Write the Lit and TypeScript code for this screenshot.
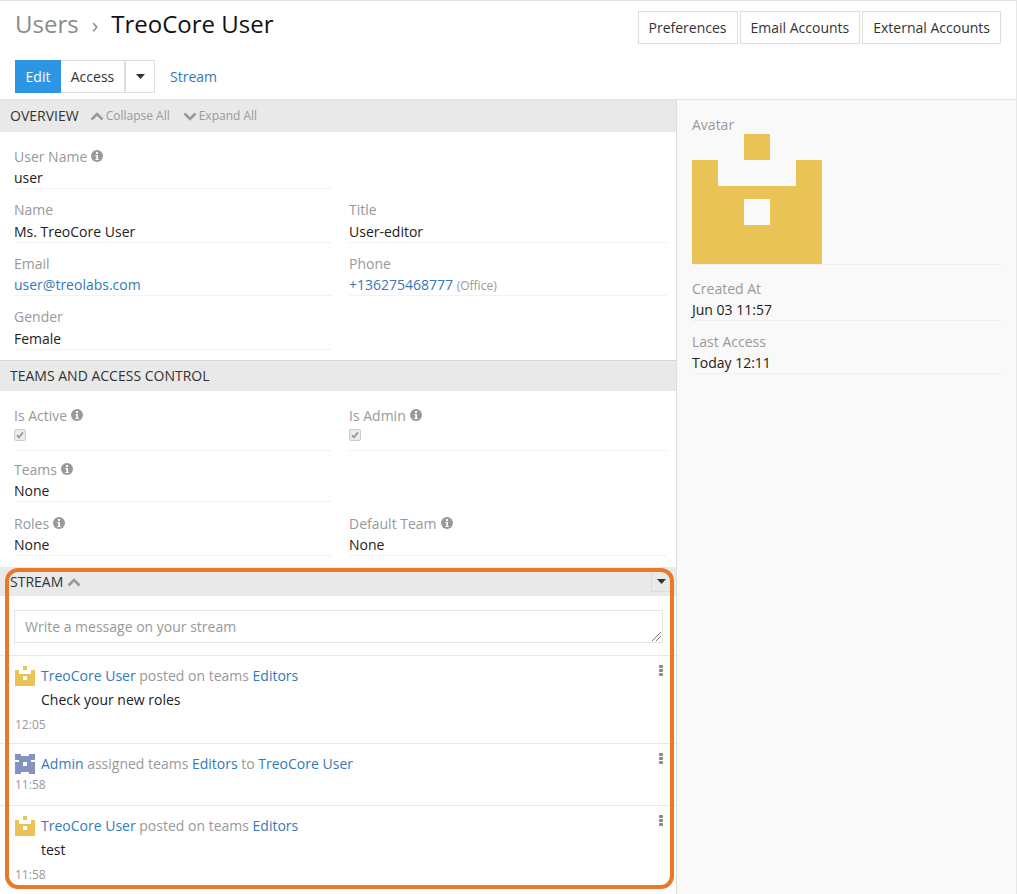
import { LitElement, css, html, svg } from 'lit';
import { customElement } from 'lit/decorators.js';

const info = html`<svg class="info" viewBox="0 0 12 12" width="12" height="12"><circle cx="6" cy="6" r="6" fill="#999"/><rect x="5" y="2" width="2" height="2" fill="#fff"/><path d="M4.4 5h2.6v4h.8v1H4.4V9h.9V6h-.9z" fill="#fff"/></svg>`;

const castle = (color: string, size: number) => html`<svg width=${size} height=${size} viewBox="0 0 10 10" shape-rendering="crispEdges">
  <g fill=${color}>${svg`<rect x="4" y="0" width="2" height="2"/><path d="M0 2h2v2h6V2h2v8H0z M4 5v2h2V5z" fill-rule="evenodd"/>`}</g>
</svg>`;

const admin = html`<svg width="20" height="20" viewBox="0 0 10 10" shape-rendering="crispEdges">
  <path fill="#8492bd" fill-rule="evenodd" d="M0 0h3v1h4V0h3v3H8v1h2v6H7V9H3v1H0V4h2V3H0z M4 4v2h2V4z"/>
</svg>`;

const caret = html`<svg width="9" height="5" viewBox="0 0 9 5"><path d="M0 0h9L4.5 5z" fill="#333"/></svg>`;

const chevron = (up: boolean, color = '#999') => html`<svg width="14" height="9" viewBox="0 0 14 9">
  <path d=${up ? 'M1.5 7.5 7 2l5.5 5.5' : 'M1.5 1.5 7 7l5.5-5.5'} fill="none" stroke=${color} stroke-width="2.6"/>
</svg>`;

@customElement('app-root')
export class AppRoot extends LitElement {
  field(label: string, value: unknown, hint = false) {
    return html`<div class="field">
      <div class="label">${label}${hint ? info : ''}</div>
      <div class="value">${value}</div>
    </div>`;
  }

  note(icon: unknown, head: unknown, time: string, text = '') {
    return html`<div class="note ${text ? 'post' : ''}">
      <a class="menu"><i></i><i></i><i></i></a>
      <div class="note-head"><span class="note-icon">${icon}</span><span>${head}</span></div>
      ${text ? html`<div class="note-text">${text}</div>` : ''}
      <div class="time">${time}</div>
    </div>`;
  }

  render() {
    const check = html`<span class="check"><svg width="8" height="8" viewBox="0 0 8 8"><path d="M1 4.2 3 6.4 7 1.4" fill="none" stroke="#999" stroke-width="1.8"/></svg></span>`;
    const empty = html`<div></div>`;
    return html`
      <header>
        <div class="top">
          <h1><span class="crumb">Users</span><span class="sep">›</span>TreoCore User</h1>
          <div class="top-buttons">
            <button>Preferences</button>
            <button>Email Accounts</button>
            <button>External Accounts</button>
          </div>
        </div>
        <div class="actions">
          <button class="primary">Edit</button>
          <button class="joined">Access</button>
          <button class="joined caret">${caret}</button>
          <a class="stream-link">Stream</a>
        </div>
      </header>
      <div class="columns">
        <main>
          <section>
            <div class="panel-head">
              <span class="panel-title">OVERVIEW</span>
              <span class="tool up">${chevron(true)}Collapse All</span>
              <span class="tool">${chevron(false)}Expand All</span>
            </div>
            <div class="grid overview">
              ${this.field('User Name', 'user', true)}${empty}
              ${this.field('Name', 'Ms. TreoCore User')}${this.field('Title', 'User-editor')}
              ${this.field('Email', html`<a>user@treolabs.com</a>`)}
              ${this.field('Phone', html`<a>+136275468777</a> <small>(Office)</small>`)}
              ${this.field('Gender', 'Female')}${empty}
            </div>
          </section>
          <section>
            <div class="panel-head teams"><span class="panel-title">TEAMS AND ACCESS CONTROL</span></div>
            <div class="grid access">
              ${this.field('Is Active', check, true)}${this.field('Is Admin', check, true)}
              ${this.field('Teams', 'None', true)}${empty}
              ${this.field('Roles', 'None', true)}${this.field('Default Team', 'None', true)}
            </div>
          </section>
          <section class="stream">
            <div class="panel-head stream-head">
              <span class="panel-title">STREAM</span><span class="stream-chev">${chevron(true)}</span>
              <span class="stream-menu">${caret}</span>
            </div>
            <div class="compose"><div class="textarea">Write a message on your stream
              <svg class="grip" width="9" height="9" viewBox="0 0 9 9"><path d="M0 9 9 0M4 9l5-5" stroke="#555" stroke-width=".8"/></svg></div></div>
            ${this.note(castle('#e9c356', 20), html`<a>TreoCore User</a> posted on teams <a>Editors</a>`, '12:05', 'Check your new roles')}
            ${this.note(admin, html`<a>Admin</a> assigned teams <a>Editors</a> to <a>TreoCore User</a>`, '11:58')}
            ${this.note(castle('#e9c356', 20), html`<a>TreoCore User</a> posted on teams <a>Editors</a>`, '11:58', 'test')}
          </section>
        </main>
        <aside>
          <div class="side-field avatar">
            <div class="label">Avatar</div>
            <div class="value">${castle('#e9c356', 130)}</div>
          </div>
          <div class="side-field"><div class="label">Created At</div><div class="value">Jun 03 11:57</div></div>
          <div class="side-field"><div class="label">Last Access</div><div class="value">Today 12:11</div></div>
        </aside>
      </div>
      <div class="highlight"></div>
    `;
  }

  static styles = css`
    :host {
      display: block;
      position: relative;
      height: 894px;
      overflow: hidden;
      box-sizing: border-box;
      border-top: 1px solid #e0e0e0;
      border-right: 1px solid #e8e8e8;
      background: #fff;
      font-family: 'Open Sans', sans-serif;
      font-size: 14px;
      line-height: 20px;
      color: #333;
    }
    * { box-sizing: border-box; }
    a { color: #337ab7; text-decoration: none; }

    header { height: 98px; padding: 0 15px; }
    .top { display: flex; justify-content: space-between; align-items: flex-start; }
    h1 {
      margin: 6px 0 0;
      font-size: 24px;
      font-weight: 400;
      line-height: 34px;
      color: #111;
    }
    .crumb { color: #8a8a8a; }
    .sep { color: #8a8a8a; margin: 0 13px; font-size: 22px; }
    .top-buttons { display: flex; gap: 2px; margin-top: 10px; }
    button {
      height: 33px;
      padding: 0 10px;
      border: 1px solid #ddd;
      background: #fff;
      font: inherit;
      color: #333;
    }
    .top-buttons button { padding: 0 10px; }
    .actions { display: flex; align-items: center; margin-top: 16px; }
    .primary { background: #2d96e4; border-color: #2d96e4; color: #fff; width: 46px; padding: 0; }
    .joined { border-left: none; width: 64px; padding: 0; }
    .caret { width: 30px; display: flex; align-items: center; justify-content: center; margin-right: 15px; border-left: 1px solid #ddd; }
    .stream-link { color: #337ab7; }

    .columns { display: flex; height: 795px; border-top: 1px solid #e4e4e4; }
    main { width: 677px; flex: none; border-right: 1px solid #ddd; background: #fff; }
    aside { flex: 1; background: #f9f9f9; padding: 14px 15px 0; }

    .panel-head {
      display: flex;
      align-items: center;
      height: 32px;
      padding: 0 10px;
      background: #e9e9e9;
      color: #333;
    }
    .teams { height: 31px; border-top: 1px solid #d8d8d8; }
    .panel-title { line-height: 20px; }
    .tool { display: flex; align-items: center; gap: 2px; font-size: 12px; color: #999; margin-left: 13px; }
    .tool.up { margin-left: 11px; }

    .grid { display: grid; grid-template-columns: 318px 318px; column-gap: 17px; padding: 14px 0 0 14px; }
    .overview { height: 228px; }
    .access { height: 176px; }
    .field { height: 53px; padding-top: 0; }
    .label { display: flex; align-items: center; gap: 4px; color: #999; height: 21px; }
    .info { flex: none; margin-top: -2px; }
    .value { height: 22px; border-bottom: 1px solid #f2f2f2; color: #222; line-height: 21px; }
    small { font-size: 12px; color: #999; }
    .check {
      display: flex;
      width: 12px;
      height: 12px;
      margin-top: 3px;
      align-items: center;
      justify-content: center;
      border: 1px solid #ccc;
      border-radius: 2px;
      background: #ececec;
    }

    .stream-head { position: relative; height: 29px; padding-top: 1px; }
    .stream-chev { margin-left: 4px; display: flex; }
    .stream-menu {
      position: absolute;
      right: 5px;
      top: 4px;
      width: 20px;
      height: 21px;
      border: 1px solid #ddd;
      display: flex;
      align-items: center;
      justify-content: center;
    }
    .compose { padding: 14px 13px 12px 14px; border-bottom: 1px solid #e8e8e8; }
    .textarea {
      position: relative;
      height: 33px;
      padding: 6px 10px;
      border: 1px solid #e4e4e4;
      color: #999;
    }
    .grip { position: absolute; right: 1px; bottom: 1px; }

    .note { position: relative; padding: 10px 14px 0 15px; height: 62px; border-bottom: 1px solid #e8e8e8; }
    .note.post { height: 88px; }
    .note:last-child { border-bottom: none; }
    .note-head { display: flex; gap: 6px; color: #999; }
    .note-icon { width: 20px; height: 20px; flex: none; display: flex; }
    .note-text { margin: 4px 0 0 26px; color: #222; }
    .post .time { margin-top: 5px; }
    .time { font-size: 12px; color: #999; margin-top: 1px; line-height: 20px; }
    .menu { position: absolute; right: 13px; top: 9px; display: flex; flex-direction: column; gap: 1px; }
    .menu i { width: 4px; height: 3px; border-radius: 1px; background: #888; }

    .side-field { height: 53px; }
    .side-field .value { width: 100%; border-bottom: 1px solid #f0f0f0; }
    .avatar { height: 164px; }
    .avatar .value { height: 131px; line-height: 0; margin-top: -1px; }

    .highlight {
      position: absolute;
      left: 5px;
      top: 567px;
      width: 669px;
      height: 321px;
      border: 4px solid #e8792a;
      border-radius: 13px;
      pointer-events: none;
    }
  `;
}
